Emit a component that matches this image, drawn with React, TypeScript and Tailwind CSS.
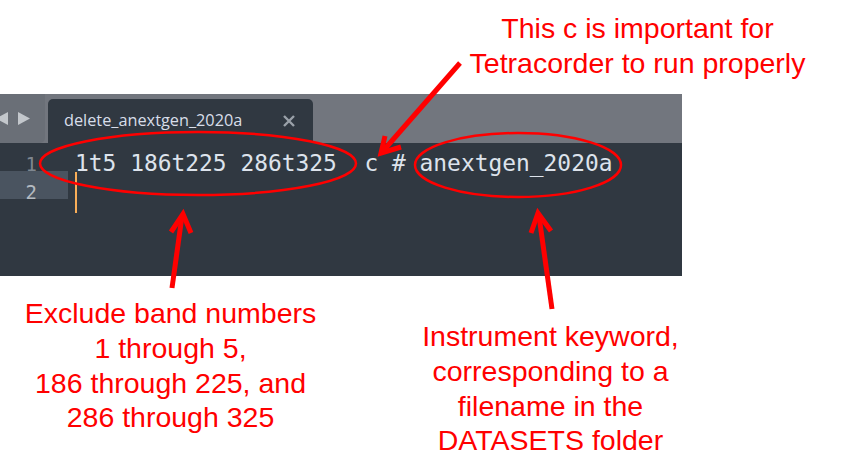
export default function App() {
  const red = "#ff0000";
  return (
    <div className="relative w-[854px] h-[476px] bg-white overflow-hidden font-['Liberation_Sans',Arial,sans-serif] text-[#ff0000]">
      {/* top note */}
      <div className="h-[94px] pl-[420px] pt-[11px]">
        <p className="w-[435px] text-center text-[28.5px] leading-[35px]">
          This c is important for
          <br />
          Tetracorder to run properly
        </p>
      </div>

      {/* editor screenshot */}
      <div className="w-[682px] h-[182px] flex flex-col">
        <div className="h-[49px] bg-[#72767e] flex items-end">
          <div className="w-[45px] h-full bg-[#6a6f77] rounded-br-[5px] self-start">
            <svg width="45" height="49" viewBox="0 0 45 49">
              <polygon points="8,18 8,31 -4,24.5" fill="#c3c7cc" />
              <polygon points="18,18 18,31 30,24.5" fill="#c3c7cc" />
            </svg>
          </div>
          <div className="ml-[3px] w-[265px] h-[44px] bg-[#303841] rounded-t-[5px] flex items-center justify-between pl-[16px] pr-[18px]">
            <span className="font-['Open_Sans',sans-serif] text-[16.3px] leading-none text-[#d8dee9] pb-[1px]">
              delete_anextgen_2020a
            </span>
            <svg width="12" height="12" viewBox="0 0 12 12">
              <path d="M1 1L11 11M11 1L1 11" stroke="#9aa1a9" strokeWidth="2.4" />
            </svg>
          </div>
        </div>
        <div className="flex-1 bg-[#303841] flex font-['DejaVu_Sans_Mono',monospace]">
          <div className="w-[68px] flex flex-col text-[19px] text-right">
            <div className="h-[28px] pr-[31px] pt-[14px] leading-[14px] text-[#7f8790]">1</div>
            <div className="h-[28px] pr-[31px] pt-[14px] leading-[14px] bg-[#4a5460] text-[#b4bac1]">2</div>
          </div>
          <div className="pl-[7px] flex flex-col">
            <div className="h-[28px] pt-[13px] leading-[14px] text-[22.9px] text-[#dde3ec] whitespace-pre">
              1t5 186t225 286t325  c # anextgen_2020a
            </div>
            <div className="mt-[1px] w-[2px] h-[41px] bg-[#f9ae58]" />
          </div>
        </div>
      </div>

      {/* bottom notes */}
      <div className="flex text-[28.5px] leading-[34.8px] text-center">
        <p className="w-[341px] pt-[20px]">
          Exclude band numbers
          <br />
          1 through 5,
          <br />
          186 through 225, and
          <br />
          286 through 325
        </p>
        <p className="ml-[79px] w-[261px] pt-[43px]">
          Instrument keyword,
          <br />
          corresponding to a
          <br />
          filename in the
          <br />
          DATASETS folder
        </p>
      </div>

      {/* annotation marks */}
      <svg
        className="absolute inset-0 pointer-events-none"
        width="854"
        height="476"
        viewBox="0 0 854 476"
      >
        <ellipse cx="198" cy="163.5" rx="158" ry="31.5" fill="none" stroke={red} strokeWidth="2.5" />
        <ellipse cx="518" cy="165" rx="103" ry="32" fill="none" stroke={red} strokeWidth="2.5" />
        <g stroke={red} strokeWidth="5" fill="none" strokeLinejoin="miter">
          <line x1="460" y1="63" x2="383" y2="151" />
          <polyline points="385,136 381,153 401,147" />
          <line x1="172" y1="288" x2="182" y2="216" />
          <polyline points="171,232 183,214 191,233" />
          <line x1="552" y1="309" x2="539" y2="216" />
          <polyline points="531,233 538,213 551,231" />
        </g>
      </svg>
    </div>
  );
}
